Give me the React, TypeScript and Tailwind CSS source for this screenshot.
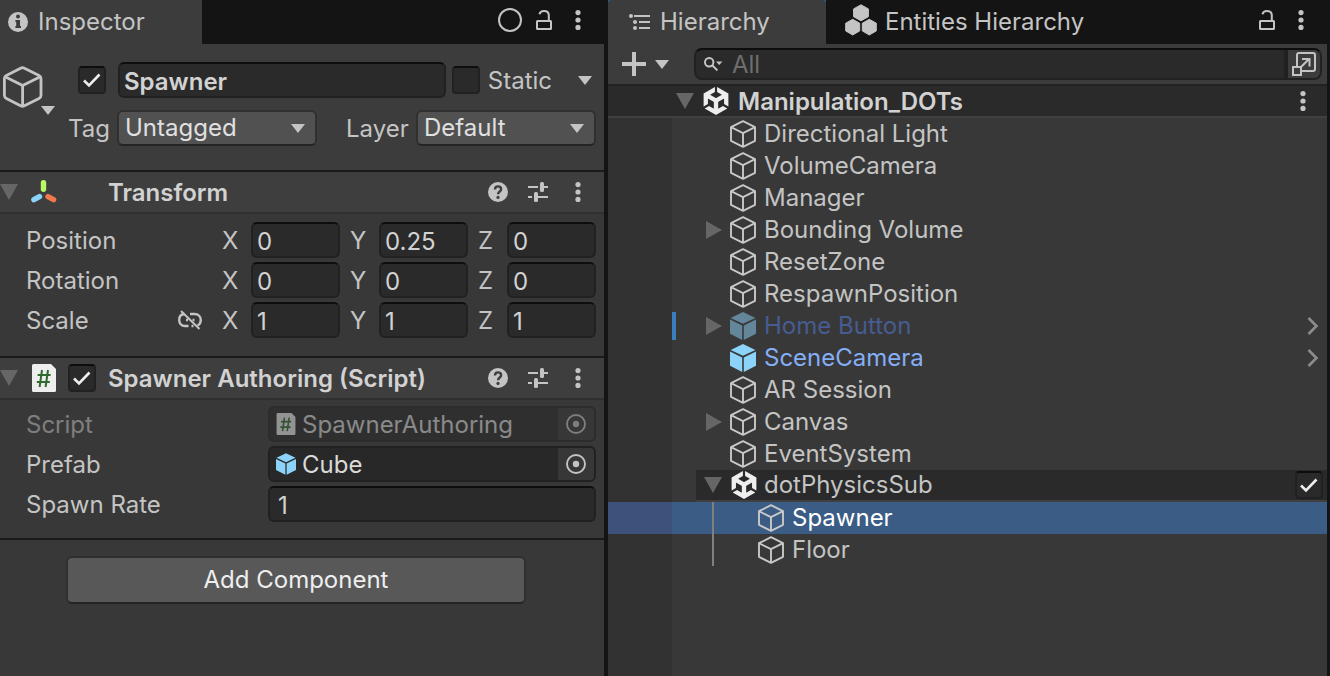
import { useState } from 'react'
import type { InputHTMLAttributes, ReactNode } from 'react'
import { SiUnity } from 'react-icons/si'

type IconKind = 'object' | 'prefab' | 'prefab-off' | 'scene'

interface HierarchyItem {
  name: string
  icon: IconKind
  depth?: number
  fold?: 'open' | 'closed'
  chevron?: boolean
  selected?: boolean
}

const ITEMS: HierarchyItem[] = [
  { name: 'Directional Light', icon: 'object' },
  { name: 'VolumeCamera', icon: 'object' },
  { name: 'Manager', icon: 'object' },
  { name: 'Bounding Volume', icon: 'object', fold: 'closed' },
  { name: 'ResetZone', icon: 'object' },
  { name: 'RespawnPosition', icon: 'object' },
  { name: 'Home Button', icon: 'prefab-off', fold: 'closed', chevron: true },
  { name: 'SceneCamera', icon: 'prefab', chevron: true },
  { name: 'AR Session', icon: 'object' },
  { name: 'Canvas', icon: 'object', fold: 'closed' },
  { name: 'EventSystem', icon: 'object' },
  { name: 'dotPhysicsSub', icon: 'scene', fold: 'open' },
  { name: 'Spawner', icon: 'object', depth: 1, selected: true },
  { name: 'Floor', icon: 'object', depth: 1 },
]

const TRANSFORM_ROWS = [
  { label: 'Position', values: ['0', '0.25', '0'] },
  { label: 'Rotation', values: ['0', '0', '0'] },
  { label: 'Scale', values: ['1', '1', '1'], unlinked: true },
]

const AXES = ['X', 'Y', 'Z']

const FIELD = 'h-9 rounded-md border-2 border-[#212121] border-t-[#0d0d0d] bg-[#2a2a2a] pt-0.5 text-[#d2d2d2] outline-none'

/* ---------- icons ---------- */

function Dots() {
  return (
    <svg width="6" height="20" viewBox="0 0 6 20" fill="#c4c4c4">
      <circle cx="3" cy="2.6" r="2.6" />
      <circle cx="3" cy="10" r="2.6" />
      <circle cx="3" cy="17.4" r="2.6" />
    </svg>
  )
}

function Lock() {
  return (
    <svg width="16" height="20" viewBox="0 0 16 20" fill="none" stroke="#c4c4c4" strokeWidth="2">
      <rect x="1" y="11" width="14" height="8" rx="0.5" />
      <path d="M3.4 4.2C4 2 5.6 1 8 1c3 0 4.8 1.7 4.8 4.4V11" />
    </svg>
  )
}

function Down({ className = 'text-[#c4c4c4]' }: { className?: string }) {
  return (
    <svg className={className} width="14" height="9" viewBox="0 0 14 9" fill="currentColor">
      <path d="M0 0h14L7 9z" />
    </svg>
  )
}

function Fold({ open }: { open: boolean }) {
  return (
    <svg className="shrink-0" width="18" height="18" viewBox="0 0 18 18" fill="#666666">
      {open ? <path d="M0 1h18L9 17z" /> : <path d="M2 0v18l16-9z" />}
    </svg>
  )
}

function Help() {
  return (
    <svg width="20" height="20" viewBox="0 0 20 20">
      <circle cx="10" cy="10" r="10" fill="#c4c4c4" />
      <path d="M7 7.6C7 5.6 8.3 4.4 10 4.4s3.1 1.1 3.1 2.8c0 2.4-3 2.3-3 5" fill="none" stroke="#3e3e3e" strokeWidth="2.4" />
      <circle cx="10" cy="15.4" r="1.6" fill="#3e3e3e" />
    </svg>
  )
}

function Presets() {
  return (
    <svg width="20" height="20" viewBox="0 0 20 20" fill="#c4c4c4">
      <path d="M0 4h10v2H0zM15 4h5v2h-5zM0 14h4v2H0zM9 14h11v2H9z" />
      <rect x="12" y="0" width="4" height="10" rx="1.5" />
      <rect x="6" y="10" width="4" height="10" rx="1.5" />
    </svg>
  )
}

function InfoIcon() {
  return (
    <svg width="20" height="20" viewBox="0 0 20 20">
      <circle cx="10" cy="10" r="10" fill="#c4c4c4" />
      <circle cx="10" cy="4.6" r="2" fill="#3c3c3c" />
      <path d="M7.4 8h4.600v6h1v2H7.400v-2h.8v-4h-.8z" fill="#3c3c3c" />
    </svg>
  )
}

function CubeOutline() {
  return (
    <svg className="shrink-0" width="26" height="28" viewBox="0 0 26 28" fill="none" stroke="#c8c8c8" strokeWidth="1.9" strokeLinejoin="round">
      <path d="M13 1.2L25 7.200v13.600L13 26.900 1 20.800V7.200z" />
      <path d="M1 7.200l12 6 12-6M13 13.200v13.700" />
    </svg>
  )
}

function BigCube() {
  return (
    <svg width="40" height="42" viewBox="0 0 40 42" fill="none" stroke="#c4c4c4" strokeWidth="2.8" strokeLinejoin="round">
      <path d="M17.6 2.2q1.9-1 3.8 0l14.6 7.2q2 1.1 2 3.2v16.6q0 2.2-2 3.2l-14.6 7.4q-1.9 1-3.8 0L3.4 32.4q-2-1-2-3.2V12.6q0-2.1 2-3.2z" />
      <path d="M2.6 11l17 8.6L36.8 11M19.6 19.6v20.2" />
    </svg>
  )
}

function CubeSolid({ className, width = 26, height = 28 }: { className: string; width?: number; height?: number }) {
  return (
    <svg className={`shrink-0 ${className}`} width={width} height={height} viewBox="0 0 26 28" fill="currentColor">
      <path d="M13 0l12.4 5.9L13 11.8.6 5.9z" />
      <path d="M0 7.6l12.2 5.8V28L0 21.8zM26 7.6l-12.2 5.8V28L26 21.8z" />
    </svg>
  )
}

function ScriptIcon({ width, height }: { width: number; height: number }) {
  return (
    <svg className="shrink-0" width={width} height={height} viewBox="0 0 24 28">
      <path d="M1.5 0H19l5 5v21.5a1.5 1.5 0 0 1-1.500 1.500h-21A1.500 1.500 0 0 1 0 26.500v-25A1.500 1.500 0 0 1 1.500 0z" fill="#eeeeee" />
      <path d="M10 6L7.600 23M16 6l-2.400 17M5.600 11h13M4.800 18h13" stroke="#2f6b2f" strokeWidth="2" fill="none" />
    </svg>
  )
}

function TransformIcon() {
  return (
    <svg width="26" height="23" viewBox="0 0 26 23" strokeWidth="5.4" strokeLinecap="round">
      <path d="M12.5 2.8v6.4" stroke="#b9f765" />
      <path d="M2.9 19.7l5.6-3.1" stroke="#8bd3f9" />
      <path d="M17 16.6l5.6 3.1" stroke="#f1784b" />
    </svg>
  )
}

function UnlinkIcon() {
  return (
    <svg width="24" height="20" viewBox="0 0 24 20" fill="none" stroke="#c4c4c4" strokeWidth="2.4">
      <path d="M6.5 4C3 4.2 1.2 6.8 1.2 10s2 6 5.8 6h3.5M12 4h4.5c4 0 6.3 2.6 6.3 6 0 2.6-1.3 4.6-3.3 5.5M13.500 16h2" />
      <path d="M8 10h2M14.5 10h2" />
      <path d="M3 1l18.5 18" strokeWidth="2" />
    </svg>
  )
}

function Target() {
  return (
    <svg width="20" height="20" viewBox="0 0 20 20">
      <circle cx="10" cy="10" r="9" fill="none" stroke="#c4c4c4" strokeWidth="1.9" />
      <circle cx="10" cy="10" r="3.2" fill="#c4c4c4" />
    </svg>
  )
}

function HierarchyIcon() {
  return (
    <svg width="22" height="16" viewBox="-1 0 22 16" fill="#c4c4c4">
      <circle cx="2" cy="2" r="2" />
      <circle cx="6" cy="8" r="2" />
      <circle cx="6" cy="14" r="2" />
      <path d="M5 1h16v2H5zM10 7h11v2H10zM10 13h11v2H10z" />
    </svg>
  )
}

function EntitiesIcon() {
  return (
    <svg width="32" height="32" viewBox="0 0 32 32" fill="#c4c4c4" stroke="#c4c4c4" strokeWidth="1" strokeLinejoin="round">
      <path d="M16 .8l7.4 4.1v7.8L16 16.8l-7.4-4.100V4.900z" />
      <path d="M7.7 15.3l7 3.9v7.7l-7 4.1-7-4.100v-7.700z" />
      <path d="M24.3 15.3l7 3.9v7.7l-7 4.1-7-4.100v-7.700z" />
    </svg>
  )
}

function SearchIcon() {
  return (
    <svg width="19" height="14" viewBox="0 0 19 14" fill="none" stroke="#c4c4c4" strokeWidth="2">
      <circle cx="5.2" cy="5.2" r="4.2" />
      <path d="M8.2 8.2l5.2 5.2" />
      <path d="M12 4.5h6.5L15.2 8z" fill="#c4c4c4" stroke="none" />
    </svg>
  )
}

function ExpandIcon() {
  return (
    <svg width="24" height="24" viewBox="0 0 24 24" fill="none" stroke="#c4c4c4" strokeWidth="2">
      <path d="M5 14V3a2 2 0 0 1 2-2h14a2 2 0 0 1 2 2v14a2 2 0 0 1-2 2H10" />
      <path d="M1 15h8v8H1zM8.5 15.5l8.5-8.5M10 7h7.500v7.500" />
    </svg>
  )
}

/* ---------- controls ---------- */

function Check(props: InputHTMLAttributes<HTMLInputElement>) {
  return (
    <span className="relative block w-7 h-7 shrink-0">
      <input
        type="checkbox"
        className="peer block w-7 h-7 appearance-none rounded-sm border-2 border-[#212121] border-t-[#0d0d0d] bg-[#2a2a2a]"
        {...props}
      />
      <svg className="absolute inset-0 hidden peer-checked:block pointer-events-none" width="28" height="28" viewBox="0 0 28 28" fill="none" stroke="#eeeeee" strokeWidth="2.6">
        <path d="M6 14.5l5 5L21.5 8.5" />
      </svg>
    </span>
  )
}

function Dropdown({ id, value, className }: { id: string; value: string; className: string }) {
  return (
    <div className={`relative min-w-0 ${className}`}>
      <select
        id={id}
        defaultValue={value}
        className="block w-full h-9 appearance-none rounded-md border-2 border-[#303030] border-b-[#242424] bg-[#515151] pl-1.5 pb-0.5 leading-8 text-[#e0e0e0] outline-none"
      >
        <option>{value}</option>
      </select>
      <span className="absolute right-3 top-3.5 pointer-events-none"><Down /></span>
    </div>
  )
}

function HeaderActions() {
  return (
    <div className="ml-auto flex items-center gap-5 pr-[23px]">
      <button type="button" aria-label="Help"><Help /></button>
      <button type="button" aria-label="Presets"><Presets /></button>
      <button type="button" aria-label="More" className="ml-[7px]"><Dots /></button>
    </div>
  )
}

function ObjectField({ label, disabled, children }: { label: string; disabled?: boolean; children: ReactNode }) {
  return (
    <div className={`flex items-center ${disabled ? 'opacity-50' : ''}`}>
      <span className="w-[242px] shrink-0 pt-0.5">{label}</span>
      <div className="flex flex-1 h-9 rounded-md border-2 border-[#212121] bg-[#282828] overflow-hidden">
        <div className="flex flex-1 items-center gap-1.5 pl-1.5 text-[#dadada]">{children}</div>
        <button type="button" disabled={disabled} aria-label={`Select ${label}`} className="grid w-9 place-items-center bg-[#373737]">
          <Target />
        </button>
      </div>
    </div>
  )
}

/* ---------- panels ---------- */

function Inspector() {
  const [name, setName] = useState('Spawner')

  return (
    <section className="flex flex-col min-w-0 bg-[#383838]">
      <div className="flex h-11 bg-[#141414]">
        <div className="flex w-[202px] items-center gap-2.5 bg-[#3c3c3c] pl-2">
          <InfoIcon />
          <h2>Inspector</h2>
        </div>
        <div className="ml-auto flex items-center pr-[23px] pb-1">
          <svg width="24" height="24" viewBox="0 0 24 24" fill="none" stroke="#c4c4c4" strokeWidth="2">
            <circle cx="12" cy="12" r="11" />
          </svg>
          <button type="button" aria-label="Lock" className="ml-3.5"><Lock /></button>
          <button type="button" aria-label="Inspector menu" className="ml-[23px]"><Dots /></button>
        </div>
      </div>

      <div className="flex border-b-2 border-[#1a1a1a] bg-[#3c3c3c] pt-[18px] pb-6 pr-2">
        <div className="w-[60px] shrink-0 pl-[3px] pt-1">
          <BigCube />
          <div className="flex pl-[38px] -mt-0.5"><Down /></div>
        </div>
        <div className="flex flex-1 flex-col min-w-0 gap-3">
          <div className="flex items-center">
            <div className="w-[58px] shrink-0 pl-[18px]"><Check defaultChecked aria-label="Active" /></div>
            <input
              aria-label="Name"
              value={name}
              onChange={e => setName(e.target.value)}
              className={`${FIELD} flex-1 min-w-0 px-1 font-semibold`}
            />
            <label className="flex items-center gap-2 pl-1.5"><Check /><span className="pt-0.5">Static</span></label>
            <button type="button" aria-label="Static flags" className="ml-[26px] mr-1"><Down /></button>
          </div>
          <div className="flex items-center">
            <label htmlFor="tag" className="w-[57px] shrink-0 pl-2 pt-0.5">Tag</label>
            <Dropdown id="tag" value="Untagged" className="flex-[200]" />
            <label htmlFor="layer" className="w-[99px] shrink-0 pl-[29px] pt-0.5">Layer</label>
            <Dropdown id="layer" value="Default" className="flex-[180]" />
          </div>
        </div>
      </div>

      <div className="flex h-[42px] items-center border-b-2 border-[#303030] bg-[#3e3e3e]">
        <Fold open />
        <div className="w-[90px] pl-[13px] pb-0.5"><TransformIcon /></div>
        <h3 className="pt-0.5 font-semibold text-[#d2d2d2]">Transform</h3>
        <HeaderActions />
      </div>
      <div className="flex flex-col gap-1 border-b-2 border-[#1a1a1a] pt-2 pb-[18px] pl-[26px] pr-2">
        {TRANSFORM_ROWS.map(row => (
          <div key={row.label} className="flex items-center">
            <div className="flex w-[196px] shrink-0 items-center justify-between pr-5">
              <span className="pt-0.5">{row.label}</span>
              {row.unlinked && <button type="button" aria-label="Constrain proportions"><UnlinkIcon /></button>}
            </div>
            <div className="grid flex-1 grid-cols-3 gap-2.5">
              {AXES.map((axis, i) => (
                <label key={axis} className="flex items-center">
                  <span className="w-[29px] pt-0.5">{axis}</span>
                  <input defaultValue={row.values[i]} className={`${FIELD} flex-1 min-w-0 px-1`} />
                </label>
              ))}
            </div>
          </div>
        ))}
      </div>

      <div className="flex h-[42px] items-center border-b-2 border-[#303030] bg-[#3e3e3e]">
        <Fold open />
        <div className="flex w-[90px] items-center gap-3 pl-3.5">
          <ScriptIcon width={24} height={28} />
          <Check defaultChecked aria-label="Enabled" />
        </div>
        <h3 className="pt-0.5 font-semibold text-[#d2d2d2]">Spawner Authoring (Script)</h3>
        <HeaderActions />
      </div>
      <div className="flex flex-col gap-1 border-b-2 border-[#1a1a1a] pt-1.5 pb-4 pl-[26px] pr-2">
        <ObjectField label="Script" disabled>
          <ScriptIcon width={20} height={22} />
          <span className="pt-0.5">SpawnerAuthoring</span>
        </ObjectField>
        <ObjectField label="Prefab">
          <CubeSolid className="text-[#8bd3f9]" width={20} height={22} />
          <span className="pt-0.5">Cube</span>
        </ObjectField>
        <label className="flex items-center">
          <span className="w-[242px] shrink-0 pt-0.5">Spawn Rate</span>
          <input defaultValue="1" className={`${FIELD} flex-1 min-w-0 px-2`} />
        </label>
      </div>

      <button
        type="button"
        className="ml-[66px] mr-[78px] mt-4 h-12 rounded-md border-2 border-[#303030] border-b-[#242424] bg-[#585858] text-[#eeeeee]"
      >
        Add Component
      </button>
    </section>
  )
}

function ItemIcon({ icon }: { icon: IconKind }) {
  if (icon === 'scene') return <SiUnity className="shrink-0 text-[#eeeeee]" size={28} />
  if (icon === 'prefab') return <CubeSolid className="text-[#8bd3f9]" />
  if (icon === 'prefab-off') return <CubeSolid className="text-[#63869a]" />
  return <CubeOutline />
}

const NAME_COLORS: Record<IconKind, string> = {
  object: 'text-[#c4c4c4]',
  scene: 'text-[#c4c4c4]',
  prefab: 'text-[#84aef5]',
  'prefab-off': 'text-[#465c92]',
}

function HierarchyRow({ item }: { item: HierarchyItem }) {
  const isScene = item.icon === 'scene'
  const isOff = item.icon === 'prefab-off'

  return (
    <li className={`flex h-8 ${item.selected ? 'bg-[#3a5c85]' : ''}`}>
      <div className={`w-16 shrink-0 ${item.selected ? 'bg-[#3d517b]' : 'bg-[#323232]'}`} />
      <div className={`my-0.5 w-1 shrink-0 ${isOff ? 'bg-[#3a7ebd]' : ''}`} />
      <div className={`ml-5 flex flex-1 items-center ${isScene ? 'border-b-2 border-[#404040] bg-[#2a2a2a]' : ''}`}>
        <div className="flex w-[34px] shrink-0 self-stretch items-center pl-2">
          {item.fold && <button type="button" aria-label={`Toggle ${item.name}`}><Fold open={item.fold === 'open'} /></button>}
          {item.depth && <div className="ml-2 h-full w-0.5 bg-[#808080]" />}
        </div>
        <div className={`flex items-center ${item.depth ? 'pl-7' : ''}`}>
          <span className="flex w-[34px] shrink-0"><ItemIcon icon={item.icon} /></span>
          <span className={item.selected ? 'text-white' : NAME_COLORS[item.icon]}>{item.name}</span>
        </div>
        {item.chevron && (
          <button type="button" aria-label={`Open ${item.name}`} className="ml-auto mr-2">
            <svg width="12" height="18" viewBox="0 0 12 18" fill="none" stroke="#8c8c8c" strokeWidth="2.6">
              <path d="M1.5 1l8 8-8 8" />
            </svg>
          </button>
        )}
        {isScene && <div className="ml-auto mr-1"><Check defaultChecked aria-label="Load sub scene" /></div>}
      </div>
    </li>
  )
}

function Hierarchy() {
  return (
    <section className="flex flex-col min-w-0 bg-[#383838]">
      <div className="flex h-11 bg-[#141414]">
        <div className="w-[218px] bg-[#2c5d87]">
          <div className="flex h-full items-center gap-2.5 rounded-t-sm bg-[#3c3c3c] pl-5">
            <HierarchyIcon />
            <h2>Hierarchy</h2>
          </div>
        </div>
        <button type="button" className="flex items-center gap-2 pl-[19px]">
          <span className="pb-1"><EntitiesIcon /></span>
          Entities Hierarchy
        </button>
        <div className="ml-auto flex items-center pr-[23px] pb-1">
          <button type="button" aria-label="Lock"><Lock /></button>
          <button type="button" aria-label="Hierarchy menu" className="ml-[23px]"><Dots /></button>
        </div>
      </div>

      <div className="flex h-10 items-center bg-[#3c3c3c] pl-3.5 pr-[5px]">
        <button type="button" aria-label="Create" className="flex w-[72px] items-center gap-[9px]">
          <svg width="24" height="24" viewBox="0 0 24 24" fill="#c4c4c4">
            <path d="M10 0h4v10h10v4H14v10h-4V14H0v-4h10z" />
          </svg>
          <Down />
        </button>
        <div className="flex h-8 flex-1 overflow-hidden rounded-lg border-2 border-[#212121] border-t-[#0d0d0d] bg-[#2a2a2a]">
          <label htmlFor="search" aria-label="Search" className="flex items-center pl-2"><SearchIcon /></label>
          <input
            id="search"
            placeholder="All"
            className="flex-1 min-w-0 bg-transparent pl-[9px] pt-0.5 outline-none placeholder:text-[#6e6e6e]"
          />
          <button type="button" aria-label="Open search window" className="grid w-9 place-items-center border-l-4 border-[#212121] bg-[#3c3c3c]">
            <ExpandIcon />
          </button>
        </div>
      </div>

      <div className="flex h-[34px] items-center border-t-2 border-b-2 border-t-[#222222] border-b-[#404040] bg-[#2a2a2a] pl-[68px] pr-[21px]">
        <button type="button" aria-label="Toggle scene"><Fold open /></button>
        <SiUnity className="ml-2 shrink-0 text-[#eeeeee]" size={28} />
        <span className="ml-2 pt-0.5 font-semibold text-[#d2d2d2]">Manipulation_DOTs</span>
        <button type="button" aria-label="Scene menu" className="ml-auto"><Dots /></button>
      </div>

      <ul>
        {ITEMS.map(item => <HierarchyRow key={item.name} item={item} />)}
      </ul>
      <div className="w-16 flex-1 bg-[#323232]" />
    </section>
  )
}

export default function App() {
  return (
    <main className="grid min-h-screen grid-cols-[604fr_719fr] gap-1 bg-[#141414] pr-[3px] font-['Inter',sans-serif] text-2xl leading-8 text-[#c4c4c4]">
      <Inspector />
      <Hierarchy />
    </main>
  )
}
